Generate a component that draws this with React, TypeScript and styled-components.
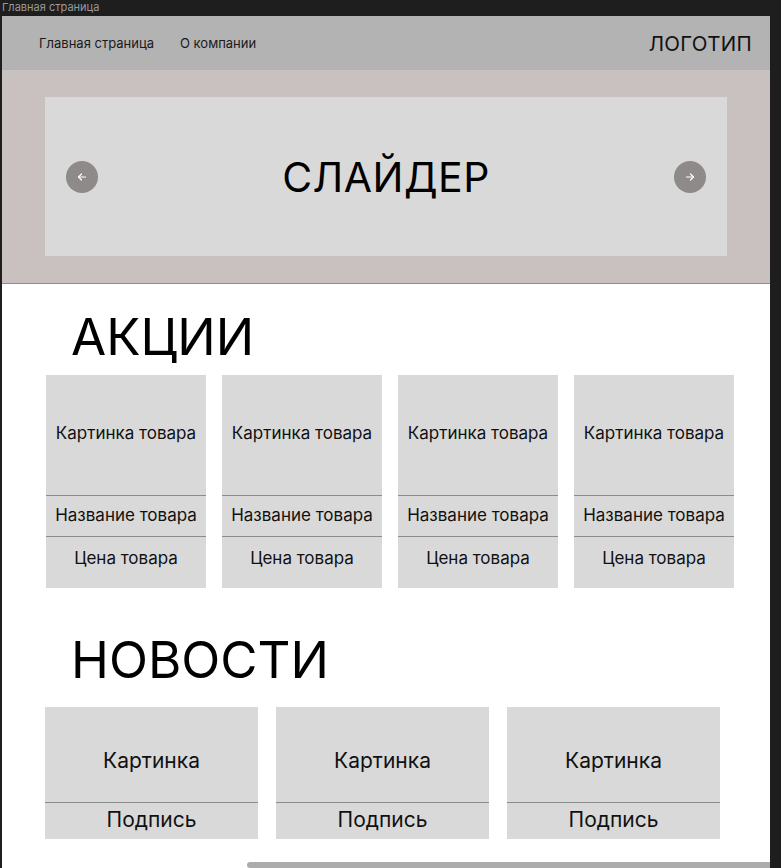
import React from "react";
import styled, { createGlobalStyle } from "styled-components";

const Global = createGlobalStyle`
  html, body { margin: 0; padding: 0; background: #1e1e1e; }
  body { font-family: Inter, "Noto Sans", "Liberation Sans", sans-serif; overflow: hidden; }
  * { box-sizing: border-box; }
`;

const Page = styled.div`
  width: 781px;
  height: 868px;
  background: #1e1e1e;
  display: flex;
  flex-direction: column;
`;

const FrameTitle = styled.div`
  height: 16px;
  padding-left: 2px;
  font-size: 11px;
  line-height: 15px;
  color: #9a9a9a;
`;

const Frame = styled.div`
  position: relative;
  margin-left: 2px;
  width: 768px;
  flex: 1;
  background: #ffffff;
  overflow: hidden;
  display: flex;
  flex-direction: column;
`;

const Header = styled.header`
  height: 54px;
  background: #b3b3b3;
  display: flex;
  align-items: center;
  justify-content: space-between;
  padding: 0 18px 0 37px;
`;

const Nav = styled.nav`
  display: flex;
  gap: 26px;
`;

const NavLink = styled.a`
  font-size: 13px;
  color: #1a1a1a;
  text-decoration: none;
`;

const Logo = styled.div`
  font-size: 20.5px;
  color: #111;
  letter-spacing: 0.3px;
`;

const SliderSection = styled.section`
  background: #c9c0c0;
  padding: 27px 43px;
  border-bottom: 1px solid #8e8e8e;
`;

const Slide = styled.div`
  height: 159px;
  background: #d9d9d9;
  display: flex;
  align-items: center;
  justify-content: space-between;
  padding: 0 21px;
`;

const SlideTitle = styled.div`
  font-size: 41px;
  color: #000;
  letter-spacing: 0.5px;
`;

const ArrowButton = styled.button`
  width: 32px;
  height: 32px;
  border-radius: 50%;
  border: none;
  background: #8e8a8a;
  display: flex;
  align-items: center;
  justify-content: center;
  padding: 0;
`;

const Section = styled.section<{ $top: number }>`
  padding-top: ${(p) => p.$top}px;
  display: flex;
  flex-direction: column;
`;

const SectionTitle = styled.h2`
  margin: 0 0 0 69px;
  font-weight: 400;
  font-size: 51px;
  line-height: 62px;
  color: #000;
`;

const ProductGrid = styled.div`
  margin: 7px 0 0 44px;
  display: grid;
  grid-template-columns: repeat(4, 160px);
  gap: 16px;
`;

const Card = styled.div`
  background: #d9d9d9;
  display: flex;
  flex-direction: column;
`;

const CardPart = styled.div<{ $h: number; $line?: boolean; $size: number; $shift?: number }>`
  height: ${(p) => p.$h}px;
  border-top: ${(p) => (p.$line ? "1px solid #8c8c8c" : "none")};
  display: flex;
  align-items: center;
  justify-content: center;
  padding-bottom: ${(p) => Math.max(0, -(p.$shift ?? 0))}px;
  padding-top: ${(p) => Math.max(0, p.$shift ?? 0)}px;
  font-size: ${(p) => p.$size}px;
  color: #111;
  white-space: nowrap;
`;

const NewsGrid = styled.div`
  margin: 16px 0 0 43px;
  display: grid;
  grid-template-columns: repeat(3, 213px);
  column-gap: 18px;
`;

const ScrollThumb = styled.div`
  position: absolute;
  left: 245px;
  right: 0;
  bottom: 0;
  height: 6px;
  background: #acacac;
  border-radius: 3px 0 0 3px;
`;

const Arrow = ({ dir }: { dir: "left" | "right" }) => (
  <svg width="10" height="10" viewBox="0 0 10 10" fill="none" stroke="#fff" strokeWidth="1.2" strokeLinecap="round" strokeLinejoin="round">
    {dir === "left" ? (
      <>
        <path d="M8.5 5H1.5" />
        <path d="M4.5 2L1.5 5L4.5 8" />
      </>
    ) : (
      <>
        <path d="M1.5 5H8.5" />
        <path d="M5.5 2L8.5 5L5.5 8" />
      </>
    )}
  </svg>
);

export default function App() {
  return (
    <Page>
      <Global />
      <FrameTitle>Главная страница</FrameTitle>
      <Frame>
        <Header>
          <Nav>
            <NavLink href="#">Главная страница</NavLink>
            <NavLink href="#">О компании</NavLink>
          </Nav>
          <Logo>ЛОГОТИП</Logo>
        </Header>
        <SliderSection>
          <Slide>
            <ArrowButton aria-label="prev">
              <Arrow dir="left" />
            </ArrowButton>
            <SlideTitle>СЛАЙДЕР</SlideTitle>
            <ArrowButton aria-label="next">
              <Arrow dir="right" />
            </ArrowButton>
          </Slide>
        </SliderSection>
        <Section $top={22}>
          <SectionTitle>АКЦИИ</SectionTitle>
          <ProductGrid>
            {[0, 1, 2, 3].map((i) => (
              <Card key={i}>
                <CardPart $h={120} $size={17} $shift={-5}>Картинка товара</CardPart>
                <CardPart $h={41} $line $size={17} $shift={-2}>Название товара</CardPart>
                <CardPart $h={52} $line $size={17} $shift={-10}>Цена товара</CardPart>
              </Card>
            ))}
          </ProductGrid>
        </Section>
        <Section $top={41}>
          <SectionTitle>НОВОСТИ</SectionTitle>
          <NewsGrid>
            {[0, 1, 2].map((i) => (
              <Card key={i}>
                <CardPart $h={95} $size={21} $shift={12}>Картинка</CardPart>
                <CardPart $h={37} $line $size={21} $shift={-4}>Подпись</CardPart>
              </Card>
            ))}
          </NewsGrid>
        </Section>
        <ScrollThumb />
      </Frame>
    </Page>
  );
}
